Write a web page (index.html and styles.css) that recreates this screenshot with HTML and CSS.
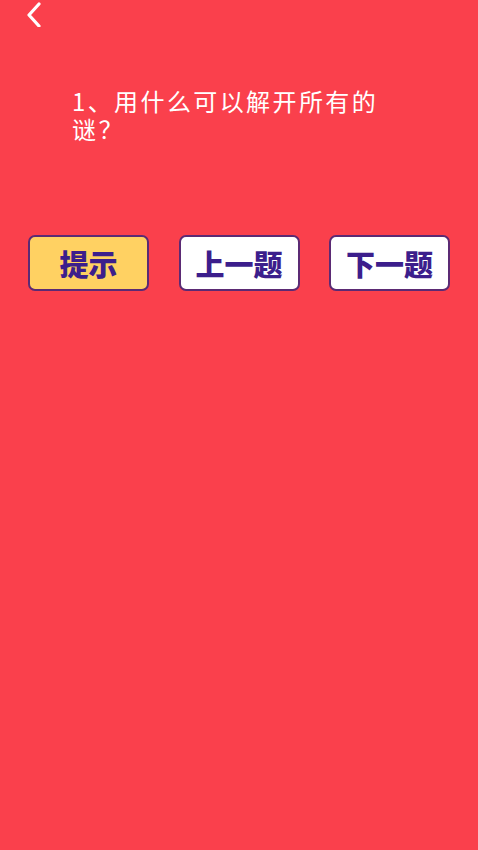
FILE: index.html
```html
<!DOCTYPE html>
<html lang="zh-CN">
<head>
    <meta charset="UTF-8">
    <meta name="viewport" content="width=device-width, initial-scale=1.0">
    <title>猜谜</title>
    <link rel="stylesheet" href="styles.css">
</head>
<body>
    <div class="page">
        <header class="top-bar">
            <a class="back-btn" href="#">
                <svg width="20" height="26" viewBox="0 0 20 26">
                    <path d="M16 3 L6 14 L16 25" fill="none" stroke="#fff" stroke-width="3.2" stroke-linecap="round" stroke-linejoin="round"/>
                </svg>
            </a>
        </header>

        <div class="question">1、用什么可以解开所有的谜？</div>

        <div class="actions">
            <button class="btn btn-hint">提示</button>
            <button class="btn">上一题</button>
            <button class="btn">下一题</button>
        </div>
    </div>
</body>
</html>
```

FILE: styles.css
```css
/* riddle page */
html, body {
    margin: 0;
    padding: 0;
    height: 100%;
}

body {
    background-color: #fa404c;
    font-family: 'Noto Sans CJK SC', 'Noto Sans', sans-serif;
}

.page {
    min-height: 100%;
}

.top-bar {
    height: 30px;
    padding-left: 23px;
}

.back-btn {
    display: inline-block;
    margin-top: 1px;
}

.question {
    margin: 57px 0 0 72px;
    width: 320px;
    color: #fff;
    font-size: 24px;
    letter-spacing: 2.4px;
    line-height: 28px;
}

.actions {
    display: flex;
    justify-content: space-between;
    padding: 0 28px;
    margin-top: 92px;
}

.btn {
    width: 121px;
    height: 56px;
    background-color: #fff;
    border: 2px solid #5b2a74;
    border-radius: 7px;
    color: #3c1e8c;
    font-family: 'Noto Sans CJK SC', sans-serif;
    font-weight: 900;
    font-size: 29px;
    padding: 0;
    cursor: pointer;
}

.btn-hint {
    background-color: #ffd162;
}
```
